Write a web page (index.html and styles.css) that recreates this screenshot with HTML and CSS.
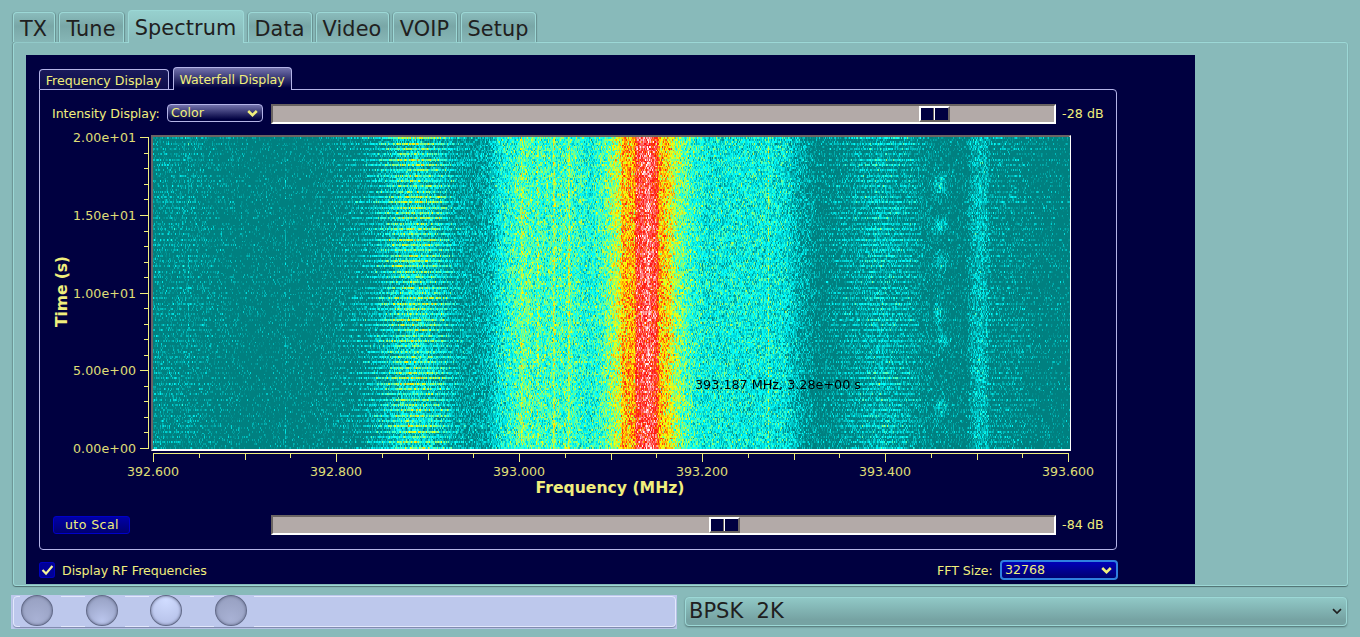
FILE: index.html
```html
<!DOCTYPE html>
<html lang="en">
<head>
<meta charset="utf-8">
<title>Spectrum</title>
<link rel="stylesheet" href="styles.css">
</head>
<body>
<nav class="tabs">
  <div class="tab t-tx">TX</div>
  <div class="tab t-tune">Tune</div>
  <div class="tab t-spectrum active">Spectrum</div>
  <div class="tab t-data">Data</div>
  <div class="tab t-video">Video</div>
  <div class="tab t-voip">VOIP</div>
  <div class="tab t-setup">Setup</div>
</nav>
<main class="page">
  <section class="display">
    <div class="subtabs">
      <div class="subtab s-freq">Frequency Display</div>
      <div class="subtab s-water active">Waterfall Display</div>
    </div>
    <div class="panel">
      <div class="row top-row">
        <span class="label intensity">Intensity Display:</span>
        <div class="combo color"><span>Color</span>
          <svg width="11" height="8" viewBox="0 0 11 8"><path d="M1.2 2L5.5 6.1L9.8 2" fill="none" stroke="#f0ee7c" stroke-width="2.6"/></svg>
        </div>
        <div class="slider slider-top"><div class="handle"><i></i><i></i></div></div>
        <span class="label db">-28 dB</span>
      </div>
      <div class="plot">
        <svg class="yaxis" width="111" height="332" viewBox="40 128 111 332">
          <path class="tick" d="M148.5 137V449M140 137.5h8M140 215.5h8M140 293.5h8M140 370.5h8M140 448.5h8M144 153.5h4M144 168.5h4M144 184.5h4M144 199.5h4M144 231.5h4M144 246.5h4M144 262.5h4M144 277.5h4M144 308.5h4M144 324.5h4M144 339.5h4M144 355.5h4M144 386.5h4M144 401.5h4M144 417.5h4M144 432.5h4"/>
          <g class="num" text-anchor="end">
            <text x="136" y="142" textLength="63">2.00e+01</text>
            <text x="136" y="220" textLength="63">1.50e+01</text>
            <text x="136" y="298" textLength="63">1.00e+01</text>
            <text x="136" y="375" textLength="63">5.00e+00</text>
            <text x="136" y="453" textLength="63">0.00e+00</text>
          </g>
          <text class="title" transform="translate(67 327) rotate(-90)" textLength="71">Time (s)</text>
        </svg>
        <div class="waterfall">
          <canvas id="fall" width="917" height="312"></canvas>
          <span class="cursor">393.187 MHz, 3.28e+00 s</span>
        </div>
      </div>
      <svg class="xaxis" width="1076" height="46" viewBox="40 452 1076 46">
        <path class="tick" d="M153 453.5H1069M153.5 453v9M336.5 453v9M519.5 453v9M702.5 453v9M885.5 453v9M1068.5 453v9M245.5 453v7M428.5 453v7M611.5 453v7M794.5 453v7M977.5 453v7M199.5 453v5M290.5 453v5M382.5 453v5M473.5 453v5M565.5 453v5M656.5 453v5M748.5 453v5M839.5 453v5M931.5 453v5M1022.5 453v5"/>
        <g class="num" text-anchor="middle">
          <text x="153" y="476" textLength="52">392.600</text>
          <text x="336" y="476" textLength="52">392.800</text>
          <text x="519" y="476" textLength="52">393.000</text>
          <text x="702" y="476" textLength="52">393.200</text>
          <text x="885" y="476" textLength="52">393.400</text>
          <text x="1068" y="476" textLength="52">393.600</text>
        </g>
        <text class="title" x="535.5" y="493" textLength="149" lengthAdjust="spacingAndGlyphs">Frequency (MHz)</text>
      </svg>
      <div class="row bottom-row">
        <div class="button"><span>Auto Scale</span></div>
        <div class="slider slider-bottom"><div class="handle"><i></i><i></i></div></div>
        <span class="label db">-84 dB</span>
      </div>
    </div>
    <div class="options">
      <div class="check"><svg width="16" height="16" viewBox="0 0 16 16"><path d="M3.5 8L7 11.6L13.4 4" fill="none" stroke="#f4f49a" stroke-width="2.2"/></svg></div>
      <span class="label rf">Display RF Frequencies</span>
      <span class="label fft">FFT Size:</span>
      <div class="combo size"><span>32768</span>
        <svg width="11" height="8" viewBox="0 0 11 8"><path d="M1.2 2L5.5 6.1L9.8 2" fill="none" stroke="#f0ee7c" stroke-width="2.6"/></svg>
      </div>
    </div>
  </section>
</main>
<footer class="status">
  <div class="leds"><div class="leds-frame">
    <b class="cell"><i class="led dim"></i></b><b class="cell"><i class="led mid"></i></b><b class="cell"><i class="led lit"></i></b><b class="cell"><i class="led dim"></i></b>
  </div></div>
  <div class="mode"><span>BPSK&nbsp; 2K</span>
    <svg width="10" height="7" viewBox="0 0 10 7"><path d="M1 1.2L5 5L9 1.2" fill="none" stroke="#202020" stroke-width="1.7"/></svg>
  </div>
</footer>
<script src="waterfall.js"></script>
</body>
</html>
```
FILE: styles.css
```css
* { box-sizing: border-box; }
body {
  margin: 0; width: 1360px; height: 637px; overflow: hidden;
  background: #88baba; color: #202020;
  font: 13px/16px "DejaVu Sans", sans-serif;
}
.tabs { display: flex; align-items: flex-end; gap: 4px; height: 42px; padding-left: 13px; }
.tab {
  height: 30px; font-size: 20.8px; line-height: 33px; text-align: center; white-space: nowrap;
  text-indent: -1px; letter-spacing: .1px;
  border: 1px solid #9cd8d6; border-bottom: 0; border-radius: 4px 4px 0 0;
  background: linear-gradient(#8abcbc, #79a7a7 45%, #86b6b6);
  box-shadow: 1px 0 1px #688f8f, -1px 0 1px #709a9a;
}
.tab.active {
  height: 33px; margin-bottom: -1px; line-height: 35px; position: relative; z-index: 1;
  background: linear-gradient(#96d0ce, #88baba 85%); box-shadow: none;
}
.t-tx { width: 42px; } .t-tune { width: 65px; } .t-spectrum { width: 116px; }
.t-data { width: 64px; } .t-video { width: 73px; } .t-voip { width: 64px; } .t-setup { width: 75px; }
.page {
  width: 1335px; height: 544px; margin-left: 13px; padding: 12px 0 0 12px;
  border: 1px solid #9cd8d6; border-radius: 3px; box-shadow: 0 1px 1px #4f7171, -1px 0 1px #709a9a;
}
.display { width: 1169px; height: 529px; background: #000040; color: #f0ee7c; padding: 12px 0 0 13px; }
.subtabs { display: flex; align-items: flex-end; gap: 4px; height: 22px; }
.subtab {
  height: 20px; line-height: 21px; font-size: 12.6px; text-align: center; white-space: nowrap;
  border: 1px solid #b4b4e8; border-bottom: 0; border-radius: 4px 4px 0 0; background: linear-gradient(#1a1a5a, #0c0c4c);
  text-indent: -1px;
}
.subtab.active {
  height: 23px; margin-bottom: -1px; line-height: 23px; position: relative; z-index: 1;
  background: linear-gradient(#7272ac, #000040 90%); letter-spacing: -.1px;
}
.s-freq { width: 130px; } .s-water { width: 119px; }
.panel { width: 1078px; height: 461px; border: 1px solid #b4b4e8; border-radius: 0 4px 4px 4px; }
.label { white-space: nowrap; font-size: 12.6px; letter-spacing: -.05px; }
.row { display: flex; align-items: center; height: 20px; }
.top-row { margin-top: 14px; padding-left: 12px; }
.intensity { width: 115px; }
.combo {
  display: flex; align-items: center; justify-content: space-between;
  font-size: 12.6px; padding: 0 4px 0 3px; border-radius: 4px;
}
.combo.color { width: 96px; height: 18px; margin: -2px 8px 0 0; border: 1px solid #b4b4e8; background: linear-gradient(#7272ac, #000040 90%); }
.combo.size { width: 118px; height: 20px; border: 2px solid #2f80e0; background: linear-gradient(#0000b8, #000070); }
.slider {
  width: 785px; height: 20px; background: #b3aaa8;
  border: 2px solid #fff; border-top-color: #6a6462; border-left-color: #6a6462;
}
.slider-top { padding-left: 646px; }
.slider-bottom { padding-left: 436px; }
.handle { display: flex; width: 31px; height: 16px; border: 2px solid #fff; border-right-color: #6a6462; border-bottom-color: #6a6462; background: #000040; }
.handle i { flex: 1; }
.handle i:first-child { flex: 0 0 13px; border-right: 1px solid #6a6462; }
.handle i:last-child { border-left: 1px solid #fff; }
.db { margin-left: 6px; letter-spacing: .1px; }
.plot { display: flex; height: 328px; }
.yaxis, .xaxis { display: block; flex: none; }
.yaxis { margin-top: 4px; }
.tick { stroke: #f0ee7c; fill: none; shape-rendering: crispEdges; }
.num { font-size: 12.6px; fill: #f0ee7c; opacity: .93; }
.title { font-size: 15.7px; font-weight: bold; fill: #f0ee7c; }
.waterfall {
  position: relative; width: 920px; height: 316px; margin-top: 11px;
  border: 2px solid #fff; border-top-color: #6a6462; border-left-color: #6a6462; background: #008080;
}
.waterfall canvas { display: block; width: 917px; height: 312px; }
.cursor { position: absolute; left: 542px; top: 240px; color: #000; font-size: 12.75px; white-space: nowrap; }
.bottom-row { padding-left: 13px; margin-top: 17px; }
.button {
  width: 77px; height: 18px; margin: 0 141px 0 0; border: 1px solid #0000c8; border-radius: 3px;
  background: linear-gradient(#0000a8, #000070); display: flex; justify-content: center;
}
.button span { width: 54px; overflow: hidden; display: flex; justify-content: center; white-space: nowrap; font-size: 12.6px; letter-spacing: .4px; }
.options { display: flex; align-items: center; height: 20px; margin-top: 10px; }
.check { width: 16px; height: 16px; border-radius: 3px; background: #000098; outline: 1px solid #0000c0; outline-offset: -1px; }
.check svg { display: block; }
.options .label { padding-top: 1px; }
.rf { margin-left: 7px; width: 875px; }
.fft { width: 63px; }
.status { display: flex; height: 34px; margin: 9px 0 0 11px; }
.leds { width: 666px; height: 34px; background: #bdc8ec; padding: 1px 1px 2px 2px; }
.leds-frame {
  display: flex; height: 31px; padding-left: 6px; gap: 24px; border: 1px solid #e2e8fc; border-radius: 4px;
  box-shadow: 0 1px 1px #7c86aa;
}
.cell { flex: none; width: 40.6px; height: 31px; margin-top: -1px; background: #bdc8ec; padding-left: 1px; }
.led { display: block; width: 32px; height: 31px; margin-top: -1px; border: 1.5px solid #626a88; box-shadow: inset 0 0 3px #626a88; border-radius: 50%; }
.led.dim { background: radial-gradient(circle at 50% 80%, #a8b1d4, #98a1c2 80%); }
.led.mid { background: radial-gradient(circle at 50% 85%, #bac5ec, #9ba5c8 75%); }
.led.lit { background: radial-gradient(circle at 50% 15%, #d0dcff, #b8c3ea 80%); }
.mode {
  display: flex; align-items: center; justify-content: space-between; width: 662px; height: 29px;
  margin: 2px 0 0 8px; padding: 0 4px 1px 3px; border: 1px solid #9cd8d6; border-radius: 4px;
  background: linear-gradient(#90c8c6, #76a3a3 80%); box-shadow: 0 1px 2px #4f7171; font-size: 21px;
}
```
FILE: waterfall.js
```js
// Mean level by column: 0 teal, 1 cyan, 2 yellow, 3 red, 4 white.
const profile = [[153,-.1],[190,-.1],[240,-.3],[300,-.3],[330,-.15],[360,-.1],[385,.4],[400,.8],[415,.95],[440,.6],[455,.25],[475,.2],[490,.4],[500,.85],[512,1.1],[525,1.35],[535,1.15],[570,1.2],[590,.95],[603,1.25],[612,1.6],[620,1.85],[622,2.3],[634,2.35],[636,3.1],[645,3.3],[648,3.5],[651,3.2],[656,3.1],[659,2.3],[668,2.1],[675,1.6],[690,1.15],[705,.85],[760,.85],[785,.75],[800,.3],[820,-.1],[850,.1],[880,.35],[915,.1],[930,-.1],[965,-.2],[972,.3],[980,.5],[986,.35],[990,-.05],[1020,-.1],[1035,-.25],[1069,-.3]];
// Strength of the horizontal banding by column.
const banding = [[153,.25],[230,.12],[260,.03],[330,.1],[360,.35],[385,.5],[400,.55],[440,.55],[465,.12],[490,0],[805,0],[840,.25],[880,.35],[912,.3],[925,.05],[985,.05],[992,.25],[1020,.2],[1069,.15]];
const carriers = { 188: .3, 285: .45, 521: .25, 522: .25, 537: .3, 538: .25, 553: .45, 554: .4, 568: .4, 569: .35, 768: .6 };
const bursts = [[940,185,7,12],[940,225,7,9],[940,261,6,9],[938,313,4,13],[943,338,7,7],[940,407,6,9]];
const stops = [[0,128,128],[0,255,255],[255,255,0],[255,16,16],[255,255,255]];

let seed = 32768;
function rand() {
  seed = (seed * 1664525 + 1013904223) >>> 0;
  return seed / 4294967296;
}
function at(table, x) {
  for (let i = 1; i < table.length; i++) {
    if (x <= table[i][0]) {
      const [a, b] = [table[i - 1], table[i]];
      return a[1] + (b[1] - a[1]) * Math.max(0, x - a[0]) / (b[0] - a[0]);
    }
  }
  return table[table.length - 1][1];
}
const canvas = document.getElementById('fall');
const ctx = canvas.getContext('2d');
const image = ctx.createImageData(canvas.width, canvas.height);
const levels = [], bands = [];
for (let x = 0; x < canvas.width; x++) {
  levels.push(at(profile, x + 153) + (carriers[x + 153] || 0));
  bands.push(at(banding, x + 153));
}
let y = 0, n = 0;
while (y < canvas.height) {
  const h = n % 3 === 1 && n % 9 !== 1 ? 1 : 2;
  const stripe = (n % 3 === 0 ? 1 : -.6) + (rand() - .5) * .8;
  for (let x = 0; x < canvas.width; x++) {
    let v = levels[x] + bands[x] * stripe;
    for (const [bx, by, rx, ry] of bursts) {
      const d = ((x + 153 - bx) / rx) ** 2 + ((y + 137 - by) / ry) ** 2;
      if (d < 4) v += .75 * Math.exp(-d);
    }
    v += (rand() + rand() + rand() - 1.5) * .72;
    v = Math.min(3.99, Math.max(0, v));
    const k = Math.floor(v), f = v - k;
    for (let j = 0; j < h && y + j < canvas.height; j++) {
      const p = ((y + j) * canvas.width + x) * 4;
      for (let c = 0; c < 3; c++) image.data[p + c] = stops[k][c] + (stops[k + 1][c] - stops[k][c]) * f;
      image.data[p + 3] = 255;
    }
  }
  y += h; n++;
}
ctx.putImageData(image, 0, 0);
```
